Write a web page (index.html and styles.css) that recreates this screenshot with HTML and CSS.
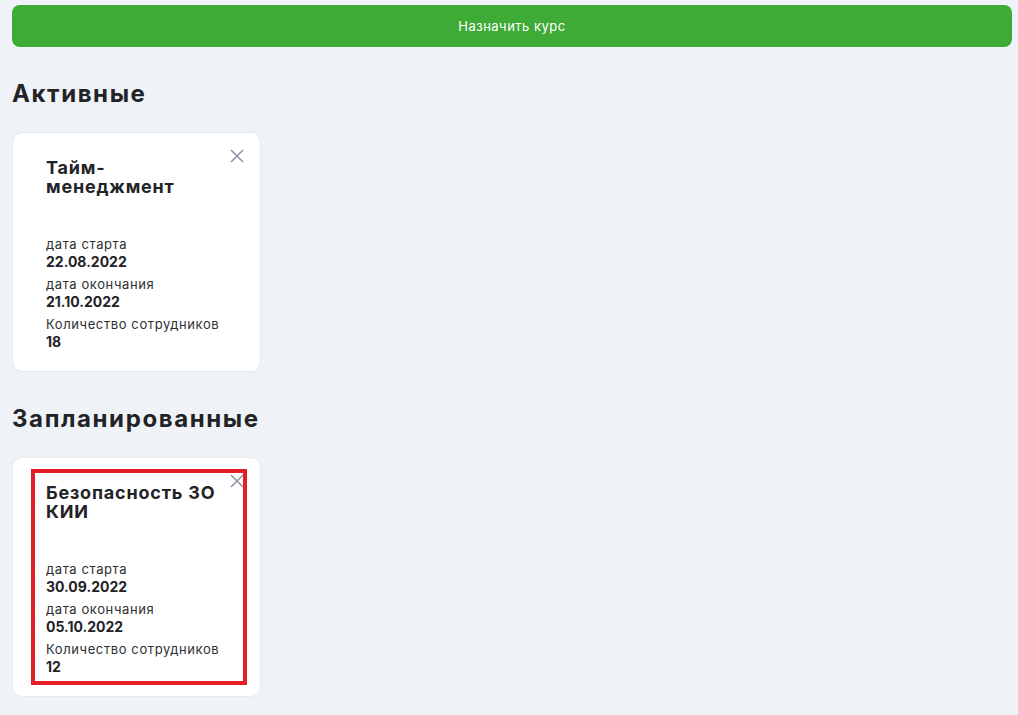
FILE: index.html
```html
<!DOCTYPE html>
<html lang="ru">
<head>
    <meta charset="UTF-8">
    <meta name="viewport" content="width=device-width, initial-scale=1.0">
    <title>Курсы</title>
    <link rel="stylesheet" href="styles.css">
</head>
<body>
    <main class="page">
        <button class="assign-btn" type="button">Назначить курс</button>

        <!-- активные курсы -->
        <section class="group">
            <h2 class="group-title">Активные</h2>
            <div class="cards">
                <article class="course-card">
                    <button class="close-btn" type="button" aria-label="Удалить">
                        <svg viewBox="0 0 14 14" width="14" height="14"><path d="M1 1L13 13M13 1L1 13" stroke="currentColor" stroke-width="1.5" fill="none"/></svg>
                    </button>
                    <div class="course-body">
                        <h3 class="course-title">Тайм-<br>менеджмент</h3>
                        <div class="course-field">
                            <div class="field-label">дата старта</div>
                            <div class="field-value">22.08.2022</div>
                        </div>
                        <div class="course-field">
                            <div class="field-label">дата окончания</div>
                            <div class="field-value">21.10.2022</div>
                        </div>
                        <div class="course-field">
                            <div class="field-label">Количество сотрудников</div>
                            <div class="field-value">18</div>
                        </div>
                    </div>
                </article>
            </div>
        </section>

        <!-- запланированные -->
        <section class="group">
            <h2 class="group-title">Запланированные</h2>
            <div class="cards">
                <article class="course-card">
                    <div class="course-body selected">
                        <h3 class="course-title">Безопасность ЗО<br>КИИ</h3>
                        <div class="course-field">
                            <div class="field-label">дата старта</div>
                            <div class="field-value">30.09.2022</div>
                        </div>
                        <div class="course-field">
                            <div class="field-label">дата окончания</div>
                            <div class="field-value">05.10.2022</div>
                        </div>
                        <div class="course-field">
                            <div class="field-label">Количество сотрудников</div>
                            <div class="field-value">12</div>
                        </div>
                    </div>
                    <button class="close-btn" type="button" aria-label="Удалить">
                        <svg viewBox="0 0 14 14" width="14" height="14"><path d="M1 1L13 13M13 1L1 13" stroke="currentColor" stroke-width="1.5" fill="none"/></svg>
                    </button>
                </article>
            </div>
        </section>
    </main>
</body>
</html>
```

FILE: styles.css
```css
:root {
    --bg: #eff2f7;
    --green: #3dab36;
    --text: #222326;
    --red: #e31e26;
}

body {
    margin: 0;
    background: var(--bg);
    font-family: Inter, "Open Sans", sans-serif;
    color: var(--text);
}

.page {
    padding: 5px 6px 20px 12px;
}

.assign-btn {
    display: block;
    width: 100%;
    height: 42px;
    border: none;
    border-radius: 8px;
    background: var(--green);
    color: white;
    font-family: inherit;
    font-size: 13px;
    letter-spacing: 0.5px;
    cursor: pointer;
    margin-bottom: 32px;
}

.group + .group {
    margin-top: 32px;
}

.group-title {
    margin: 0 0 23px;
    font-size: 24px;
    line-height: 30px;
    font-weight: 700;
    letter-spacing: 1.6px;
}

.cards {
    display: flex;
    gap: 20px;
}

.course-card {
    position: relative;
    width: 249px;
    height: 240px;
    box-sizing: border-box;
    padding: 11px 13px 11px 18px;
    background: white;
    border: 1px solid #e6e9ef;
    border-radius: 10px;
}

.course-body {
    height: 100%;
    box-sizing: border-box;
    padding: 14px 14px 14px 15px;
}

.course-body.selected {
    outline: 4px solid var(--red);
    outline-offset: -4px;
}

.course-title {
    margin: 0 0 40px;
    font-size: 18px;
    line-height: 19px;
    font-weight: 700;
    letter-spacing: 0.8px;
}

.course-field {
    margin-bottom: 6px;
}

.field-label {
    font-size: 13px;
    line-height: 17px;
    color: #2e2f33;
    letter-spacing: 0.6px;
}

.field-value {
    font-size: 14px;
    line-height: 17px;
    font-weight: 700;
}

.close-btn {
    position: absolute;
    top: 16px;
    right: 16px;
    width: 14px;
    height: 14px;
    padding: 0;
    border: none;
    background: none;
    color: #8c94a1;
    cursor: pointer;
}

.close-btn svg {
    display: block;
}
```
